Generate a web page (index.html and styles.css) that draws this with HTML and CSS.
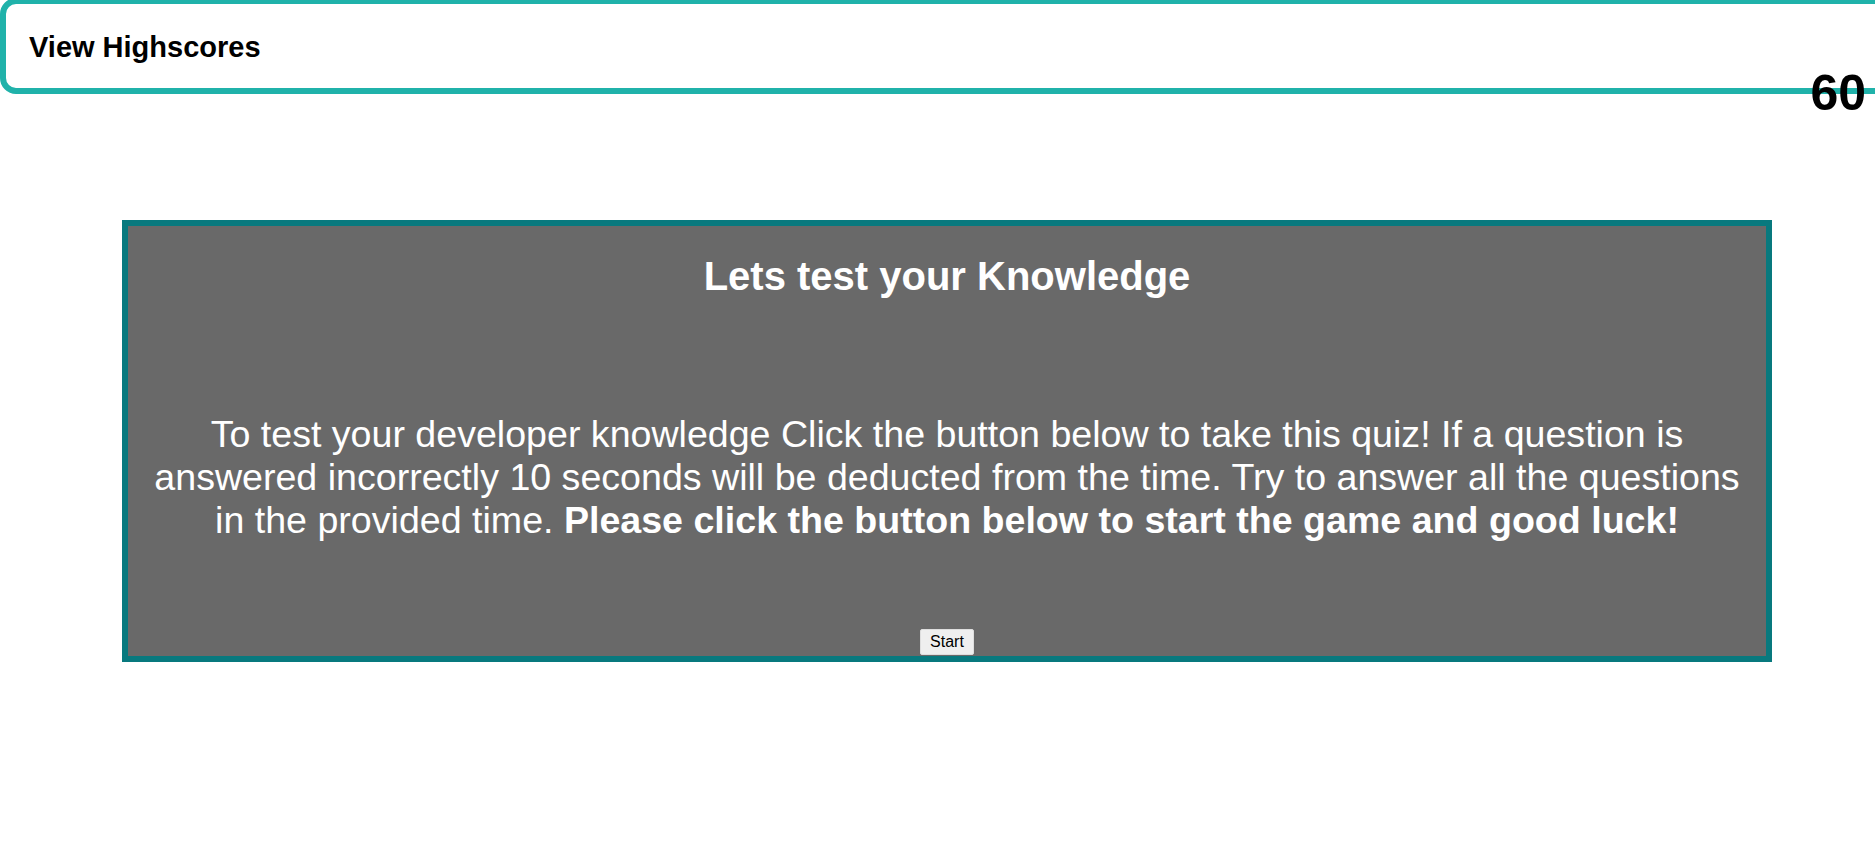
FILE: index.html
```html
<!DOCTYPE html>
<html lang="en">
<head>
<meta charset="utf-8">
<title>Code Quiz</title>
<link rel="stylesheet" href="styles.css">
</head>
<body>
<header class="topbar">
  <a class="highscores" href="#">View Highscores</a>
</header>
<div class="timer">60</div>
<main class="quiz">
  <section class="card">
    <h1 class="card-title">Lets test your Knowledge</h1>
    <p class="card-text">To test your developer knowledge Click the button below to take this quiz! If a question is answered incorrectly 10 seconds will be deducted from the time. Try to answer all the questions in the provided time. <strong>Please click the button below to start the game and good luck!</strong></p>
    <button class="start-btn" type="button">Start</button>
  </section>
</main>
</body>
</html>
```

FILE: styles.css
```css
html, body {
  margin: 0;
  padding: 0;
  background: #ffffff;
  font-family: "Liberation Sans", Arial, sans-serif;
  overflow: hidden;
}

.topbar {
  box-sizing: border-box;
  display: flex;
  align-items: center;
  height: 96px;
  margin-top: -2px;
  width: calc(100% + 30px);
  border: 6px solid #20b2aa;
  border-radius: 16px;
  padding-left: 23px;
  padding-top: 2px;
}

.highscores {
  color: #000000;
  text-decoration: none;
  font-weight: bold;
  font-size: 29px;
}

.timer {
  position: absolute;
  right: 9px;
  top: 64px;
  font-weight: bold;
  font-size: 50px;
  color: #000000;
}

.quiz {
  padding: 126px 103px 0 122px;
}

.card {
  box-sizing: border-box;
  width: 1650px;
  height: 442px;
  border: 6px solid #08797e;
  background: #696969;
  color: #ffffff;
  display: flex;
  flex-direction: column;
  align-items: center;
  padding: 28px 18px 1px;
}

.card-title {
  margin: 0;
  font-size: 40px;
  font-weight: bold;
  text-align: center;
}

.card-text {
  margin: 114px 0 0;
  font-size: 37.6px;
  line-height: 43px;
  text-align: center;
}

.start-btn {
  margin-top: auto;
  font-family: "Liberation Sans", Arial, sans-serif;
  font-size: 16px;
  line-height: 18px;
  padding: 3px 9px;
  background: #efefef;
  border: 1px solid #dedede;
  border-radius: 2px;
  color: #000000;
}
```
